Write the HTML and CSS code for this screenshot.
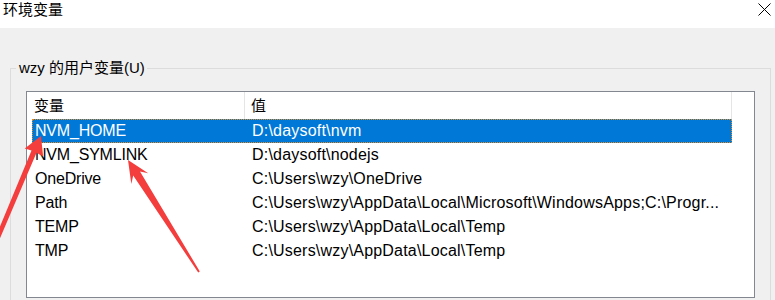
FILE: index.html
```html
<!DOCTYPE html>
<html lang="zh-CN">
<head>
    <meta charset="UTF-8">
    <meta name="viewport" content="width=device-width, initial-scale=1.0">
    <title>环境变量</title>
    <link rel="stylesheet" href="styles.css">
</head>
<body>
    <div class="titlebar">
        <span class="title">环境变量</span>
        <svg class="close" width="13" height="13" viewBox="0 0 13 13">
            <path d="M0.5 0.5 L12.5 12.5 M12.5 0.5 L0.5 12.5" stroke="#000" stroke-width="1" fill="none"/>
        </svg>
    </div>
    <div class="dialog">
        <fieldset class="group">
            <legend>wzy 的用户变量(U)</legend>
            <div class="listview">
                <div class="header">
                    <div class="hcol hcol-name">变量</div>
                    <div class="hcol hcol-value">值</div>
                </div>
                <div class="row selected">
                    <div class="col col-name">NVM_HOME</div>
                    <div class="col col-value">D:\daysoft\nvm</div>
                </div>
                <div class="row">
                    <div class="col col-name">NVM_SYMLINK</div>
                    <div class="col col-value">D:\daysoft\nodejs</div>
                </div>
                <div class="row">
                    <div class="col col-name">OneDrive</div>
                    <div class="col col-value">C:\Users\wzy\OneDrive</div>
                </div>
                <div class="row">
                    <div class="col col-name">Path</div>
                    <div class="col col-value">C:\Users\wzy\AppData\Local\Microsoft\WindowsApps;C:\Progr...</div>
                </div>
                <div class="row">
                    <div class="col col-name">TEMP</div>
                    <div class="col col-value">C:\Users\wzy\AppData\Local\Temp</div>
                </div>
                <div class="row">
                    <div class="col col-name">TMP</div>
                    <div class="col col-value">C:\Users\wzy\AppData\Local\Temp</div>
                </div>
            </div>
        </fieldset>
    </div>
    <svg class="arrows" width="775" height="300" viewBox="0 0 775 300">
        <polygon fill="#f43d3d" points="41,136 43.1,156.4 36.5,152.8 -2,243 -6,241 31.5,150.6 24.7,148.6"/>
        <polygon fill="#f43d3d" points="128,160 148.2,173.2 140,171.4 199.8,271.5 198.2,272.5 133.2,175.6 131.3,184"/>
    </svg>
</body>
</html>
```

FILE: styles.css
```css
body {
    margin: 0;
    padding: 0;
    width: 775px;
    height: 300px;
    overflow: hidden;
    position: relative;
    background-color: #f0f0f0;
    font-family: 'Liberation Sans', 'Noto Sans CJK SC', sans-serif;
    font-size: 15px;
    color: #000;}
.titlebar {
    height: 28px;
    background-color: #fff;
    display: flex;
    justify-content: space-between;
    align-items: flex-start;}
.title {
    padding-left: 3px;
    line-height: 20px;}
.close {
    margin: 3px 4px 0 0;}
.dialog {
    padding: 30px 4px 0 10px;}
.group {
    margin: 0;
    padding: 0;
    border: 1px solid #dcdcdc;
    border-bottom: none;}
.group legend {
    margin-left: 5px;
    padding: 0 2px 0 3px;
    line-height: 20px;}
.listview {
    margin: 13px 0 2px 15px;
    width: 727px;
    height: 205px;
    border: 1px solid #828790;
    background-color: #fff;}
.header {
    display: flex;
    height: 27px;
    line-height: 27px;}
.hcol {
    border-right: 1px solid #e5e5e5;
    box-sizing: border-box;}
.hcol-name {
    width: 218px;
    padding-left: 7px;}
.hcol-value {
    width: 487px;
    padding-left: 6px;}
.row {
    display: flex;
    margin-left: 5px;
    width: 700px;
    height: 24px;
    line-height: 24px;
    font-size: 16px;
    letter-spacing: 0.2px;
    box-sizing: border-box;
    white-space: nowrap;}
.row.selected {
    background-color: #0078d7;
    color: #fff;
    outline: 1px dotted #e8891c;
    outline-offset: -1px;}
.col {
    overflow: hidden;}
.col-name {
    width: 213px;
    padding-left: 3px;
    letter-spacing: -0.2px;
    box-sizing: border-box;}
.col-value {
    width: 487px;
    padding-left: 7px;
    box-sizing: border-box;}
.arrows {
    position: absolute;
    top: 0;
    left: 0;
    pointer-events: none;}
```
